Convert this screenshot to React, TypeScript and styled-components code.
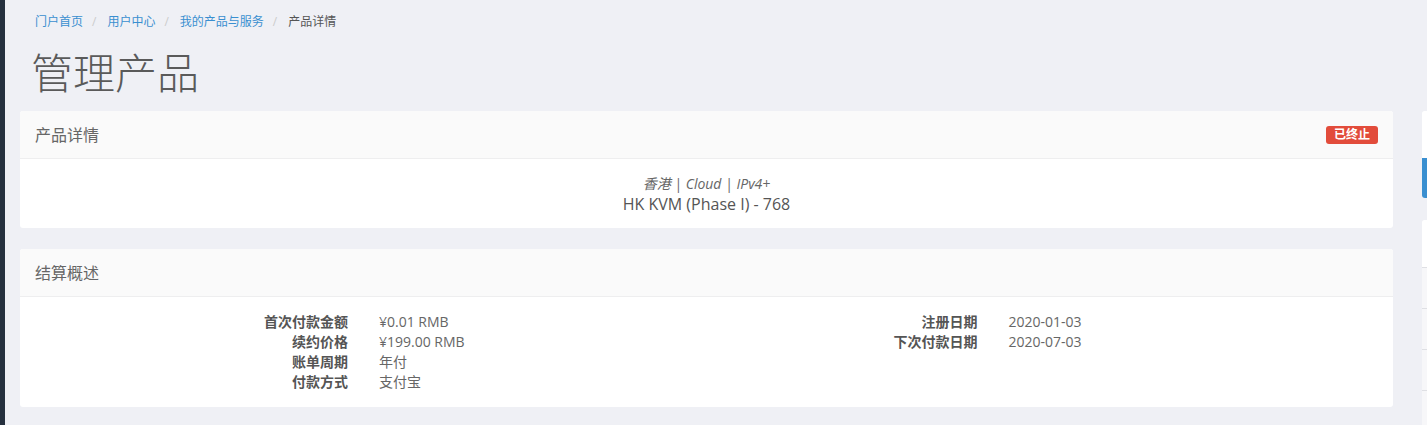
import styled, { createGlobalStyle } from "styled-components";

const GlobalStyle = createGlobalStyle`
  html, body {
    margin: 0;
    padding: 0;
    background: #eff0f5;
    overflow: hidden;
  }
  body {
    font-family: "Open Sans", "Noto Sans CJK SC", sans-serif;
    color: #666;
  }
  * {
    box-sizing: border-box;
  }
`;

const crumbs = ["门户首页", "用户中心", "我的产品与服务"];

const billingLeft = [
  ["首次付款金额", "¥0.01 RMB"],
  ["续约价格", "¥199.00 RMB"],
  ["账单周期", "年付"],
  ["付款方式", "支付宝"],
];

const billingRight = [
  ["注册日期", "2020-01-03"],
  ["下次付款日期", "2020-07-03"],
];

// sidebar is cut off by the window edge, only its boxes show
const sideLinks = 4;

const App: React.FC = () => {
  return (
    <>
      <GlobalStyle />
      <StyledPage>
        <StyledNavStrip />
        <StyledContent>
          <StyledBreadcrumb>
            {crumbs.map((c) => (
              <StyledCrumb key={c}>
                <StyledCrumbLink href="#">{c}</StyledCrumbLink>
                <StyledSep>/</StyledSep>
              </StyledCrumb>
            ))}
            <StyledCrumbActive>产品详情</StyledCrumbActive>
          </StyledBreadcrumb>
          <StyledTitle>管理产品</StyledTitle>

          <StyledRow>
            <StyledMain>
              <StyledCard>
                <StyledCardHeader>
                  <StyledCardTitle>产品详情</StyledCardTitle>
                  <StyledBadge>已终止</StyledBadge>
                </StyledCardHeader>
                <StyledProductBody>
                  <StyledProductGroup>香港 | Cloud | IPv4+</StyledProductGroup>
                  <StyledProductName>HK KVM (Phase I) - 768</StyledProductName>
                </StyledProductBody>
              </StyledCard>

              <StyledCard>
                <StyledCardHeader>
                  <StyledCardTitle>结算概述</StyledCardTitle>
                </StyledCardHeader>
                <StyledBillingBody>
                  <StyledInfoList $labelWidth={328}>
                    {billingLeft.map(([k, v]) => (
                      <StyledInfoItem key={k}>
                        <StyledLabel>{k}</StyledLabel>
                        <StyledValue>{v}</StyledValue>
                      </StyledInfoItem>
                    ))}
                  </StyledInfoList>
                  <StyledInfoList $labelWidth={271}>
                    {billingRight.map(([k, v]) => (
                      <StyledInfoItem key={k}>
                        <StyledLabel>{k}</StyledLabel>
                        <StyledValue>{v}</StyledValue>
                      </StyledInfoItem>
                    ))}
                  </StyledInfoList>
                </StyledBillingBody>
              </StyledCard>
            </StyledMain>

            <StyledSidebar>
              <StyledSidePanel>
                <StyledSideHeader />
                <StyledSideActive />
              </StyledSidePanel>
              <StyledSidePanel>
                <StyledSideHeader />
                {Array.from({ length: sideLinks }).map((_, i) => (
                  <StyledSideItem key={i} />
                ))}
              </StyledSidePanel>
            </StyledSidebar>
          </StyledRow>
        </StyledContent>
      </StyledPage>
    </>
  );
};

export default App;

const StyledPage = styled.div`
  display: flex;
  width: 1427px;
  height: 425px;
  overflow: hidden;
`;

const StyledNavStrip = styled.div`
  width: 5px;
  flex-shrink: 0;
  background: #25303e;
`;

const StyledContent = styled.div`
  flex: 1;
  min-width: 0;
  padding: 13px 0 0 15px;
`;

const StyledBreadcrumb = styled.div`
  display: flex;
  align-items: center;
  padding-left: 15px;
  font-size: 12px;
  line-height: 18px;
`;

const StyledCrumb = styled.span`
  display: inline-flex;
  align-items: center;
`;

const StyledCrumbLink = styled.a`
  color: #3a8fd0;
  text-decoration: none;
`;

const StyledSep = styled.span`
  margin: 0 11px 0 9px;
  color: #ccc;
`;

const StyledCrumbActive = styled.span`
  color: #555;
`;

const StyledTitle = styled.h1`
  margin: 17px 0 17px 11px;
  font-size: 42px;
  line-height: 46px;
  font-weight: 300;
  color: #5a5a5a;
  font-family: "Noto Sans CJK SC", sans-serif;
`;

const StyledRow = styled.div`
  display: flex;
  gap: 29px;
  align-items: flex-start;
`;

const StyledMain = styled.div`
  width: 1373px;
  flex-shrink: 0;
  display: flex;
  flex-direction: column;
  gap: 21px;
`;

const StyledCard = styled.div`
  background: #fff;
  border-radius: 3px;
  overflow: hidden;
`;

const StyledCardHeader = styled.div`
  display: flex;
  align-items: center;
  justify-content: space-between;
  height: 48px;
  padding: 0 15px;
  background: #fafafa;
  border-bottom: 1px solid #eeeeef;
`;

const StyledCardTitle = styled.h3`
  margin: 0;
  font-size: 16px;
  font-weight: 400;
  color: #666;
  line-height: 20px;
`;

const StyledBadge = styled.span`
  display: inline-block;
  height: 18px;
  padding: 0 8px;
  border-radius: 3px;
  background: #e24c3b;
  color: #fff;
  font-size: 12px;
  font-weight: 700;
  line-height: 18px;
`;

const StyledProductBody = styled.div`
  padding: 15px 15px 14px;
  text-align: center;
`;

const StyledProductGroup = styled.div`
  font-size: 14px;
  line-height: 20px;
  font-style: italic;
  color: #666;
`;

const StyledProductName = styled.div`
  font-size: 16px;
  line-height: 20px;
  color: #555;
`;

const StyledBillingBody = styled.div`
  display: grid;
  grid-template-columns: 1fr 1fr;
  align-items: start;
  padding: 15px 0;
`;

const StyledInfoList = styled.div<{ $labelWidth: number }>`
  display: grid;
  grid-template-columns: ${(p) => p.$labelWidth}px 1fr;
  grid-auto-rows: 20px;
  align-content: start;
  column-gap: 31px;
`;

const StyledInfoItem = styled.div`
  display: contents;
`;

const StyledLabel = styled.div`
  text-align: right;
  font-size: 14px;
  line-height: 20px;
  font-weight: 700;
  color: #555;
`;

const StyledValue = styled.div`
  font-size: 14px;
  line-height: 20px;
  color: #666;
`;

const StyledSidebar = styled.div`
  width: 260px;
  flex-shrink: 0;
  display: flex;
  flex-direction: column;
  gap: 22px;
`;

const StyledSidePanel = styled.div`
  background: #f7f7f9;
  border-radius: 3px;
  overflow: hidden;
`;

const StyledSideHeader = styled.div`
  height: 47px;
  background: #fff;
`;

const StyledSideActive = styled.div`
  height: 40px;
  background: #3a8fd0;
`;

const StyledSideItem = styled.div`
  height: 41px;
  border-top: 1px solid #dfe0e4;
`;
